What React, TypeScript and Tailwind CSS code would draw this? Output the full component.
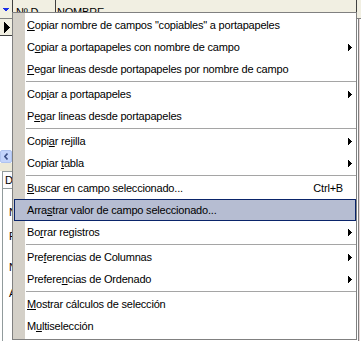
import React from "react";

type Entry =
  | { sep: true }
  | { label: string; u: number; arrow?: boolean; shortcut?: string; active?: boolean };

const items: Entry[] = [
  { label: 'Copiar nombre de campos "copiables" a portapapeles', u: 0 },
  { label: "Copiar a portapapeles con nombre de campo", u: 1, arrow: true },
  { label: "Pegar lineas desde portapapeles por nombre de campo", u: 0 },
  { sep: true },
  { label: "Copiar a portapapeles", u: 3, arrow: true },
  { label: "Pegar lineas desde portapapeles", u: 1 },
  { sep: true },
  { label: "Copiar rejilla", u: 4, arrow: true },
  { label: "Copiar tabla", u: 7, arrow: true },
  { sep: true },
  { label: "Buscar en campo seleccionado...", u: 0, shortcut: "Ctrl+B" },
  { label: "Arrastrar valor de campo seleccionado...", u: 4, active: true },
  { label: "Borrar registros", u: 2, arrow: true },
  { sep: true },
  { label: "Preferencias de Columnas", u: 3, arrow: true },
  { label: "Preferencias de Ordenado", u: 7, arrow: true },
  { sep: true },
  { label: "Mostrar cálculos de selección", u: 0 },
  { label: "Multiselección", u: 1 },
];

function Mnemonic({ text, u }: { text: string; u: number }) {
  return (
    <span className="whitespace-pre">
      {text.slice(0, u)}
      <span className="underline decoration-1 underline-offset-[1px]">{text[u]}</span>
      {text.slice(u + 1)}
    </span>
  );
}

function Arrow() {
  return (
    <svg width="4" height="7" viewBox="0 0 4 7" shapeRendering="crispEdges">
      <polygon points="0,0 4,3.5 0,7" fill="#000" />
    </svg>
  );
}

function ContextMenu() {
  return (
    <div className="absolute left-[12px] top-[12px] w-[345px] border border-[#808080] bg-[linear-gradient(to_right,#d4d0c8_12px,#ffffff_12px)] pt-[1px] pb-[2px]">
      {items.map((it, i) =>
        "sep" in it ? (
          <div key={i} className="h-[3px] pt-[1px] pl-[13px]">
            <div className="h-px bg-[#a5a5a5]" />
          </div>
        ) : (
          <div
            key={i}
            className={
              it.active
                ? "flex h-[22px] items-center ml-[1px] pl-[12px] border border-[#0a246a] bg-[#b6bdd2]"
                : "flex h-[22px] items-center pl-[14px]"
            }
          >
            <div className="flex-1">
              <Mnemonic text={it.label} u={it.u} />
            </div>
            {it.shortcut && <span>{it.shortcut}</span>}
            <div className={it.active ? "w-[12px] pl-[5px]" : "w-[13px] pl-[5px] flex items-center"}>
              {it.arrow && <Arrow />}
            </div>
          </div>
        )
      )}
    </div>
  );
}

export default function App() {
  return (
    <div className="relative w-[361px] h-[341px] overflow-hidden bg-white text-[11px] leading-none tracking-[-0.2px] text-black font-['Liberation_Sans',Arial,sans-serif]">
      {/* grid header */}
      <div className="flex h-[19px] bg-[#f1efe2] border-b border-[#808080]">
        <div className="w-[13px] border-r border-[#404040] flex justify-center pt-[8px]">
          <svg width="6" height="4" viewBox="0 0 6 4" shapeRendering="crispEdges">
            <polygon points="0,0 6,0 3,4" fill="#1a2ee8" />
          </svg>
        </div>
        <div className="w-[43px] border-r border-[#404040] pl-[3px] pt-[7px]">Nº D</div>
        <div className="w-[301px] border-r border-[#404040] pl-[1px] pt-[7px]">NOMBRE</div>
        <div className="flex-1" />
      </div>

      <div className="flex h-[322px]">
        {/* left strip */}
        <div className="w-[60px] flex flex-col">
          <div className="w-[13px] h-[17px] border-b border-[#404040] bg-[#f1efe2] flex items-center pl-[4px]">
            <svg width="6" height="11" viewBox="0 0 6 11" shapeRendering="crispEdges">
              <polygon points="0,0 6,5.5 0,11" fill="#000" />
            </svg>
          </div>
          <div className="h-[114px]" />
          <div className="w-[12px] h-[13px] rounded-[2px] bg-[#c3d4fb] border border-[#b0c4f0] flex items-center justify-center">
            <svg width="4" height="7" viewBox="0 0 4 7">
              <polyline points="3.5,0.5 0.8,3.5 3.5,6.5" fill="none" stroke="#3c4f86" strokeWidth="1.6" />
            </svg>
          </div>
          <div className="h-[8px] bg-[#ece9d8]" />
          <div className="h-[17px] border-t border-[#919b9c] ml-[2px] border-l pl-[2px] pt-[3px] bg-[#fcfcfe]">D</div>
          <div className="flex-1 ml-[2px] border-l border-t border-[#919b9c] pl-[6px] flex flex-col">
            <div className="mt-[18px] h-[12px]">N</div>
            <div className="mt-[12px] h-[12px]">F</div>
            <div className="mt-[19px] h-[12px]">N</div>
            <div className="mt-[14px] h-[12px]">A</div>
          </div>
        </div>
        <div className="flex-1" />
        {/* right edge of the grid */}
        <div className="w-[4px] flex">
          <div className="w-px ml-[1px] bg-[#808080]" />
          <div className="w-px bg-[#e8d8d8]" />
        </div>
      </div>

      <ContextMenu />
    </div>
  );
}
